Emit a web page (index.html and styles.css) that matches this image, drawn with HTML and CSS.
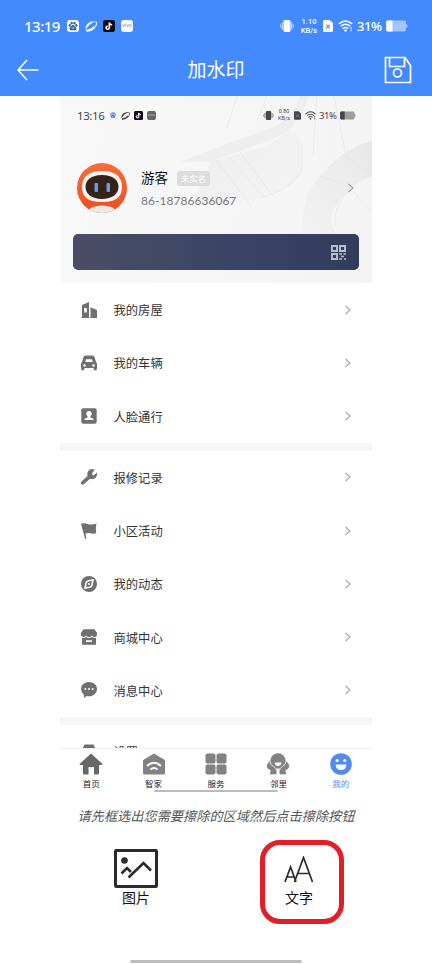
FILE: index.html
```html
<!DOCTYPE html>
<html lang="zh-CN">
<head>
<meta charset="utf-8">
<title>加水印</title>
<link rel="stylesheet" href="styles.css">
</head>
<body>
<svg class="defs" width="0" height="0">
  <symbol id="chev" viewBox="0 0 8 10"><path d="M1.5 .8 6 5 1.5 9.2" fill="none" stroke="#a0a0a0" stroke-width="1.1"/></symbol>
  <symbol id="paw" viewBox="0 0 12 12"><g fill="currentColor"><ellipse cx="2.8" cy="5.4" rx="1.1" ry="1.4"/><ellipse cx="4.7" cy="3.2" rx="1.1" ry="1.4"/><ellipse cx="7.5" cy="3.2" rx="1.1" ry="1.4"/><ellipse cx="9.3" cy="5.4" rx="1.1" ry="1.4"/><path d="M6 5C4.7 5 4.4 6.5 3.3 7.3 1.8 8.7 2.7 10.5 4.4 10.3q1.6-.3 3.2 0C9.5 10.5 10.2 8.7 8.7 7.3 7.6 6.5 7.3 5 6 5Z"/></g><path d="M4.7 8h2.7" stroke="#fff" stroke-width=".8"/></symbol>
  <symbol id="leaf" viewBox="0 0 12 12"><path d="M1 9.800C-.8 5.500 4.500.3 11.300 1.500 8 1.800 2.800 5 1 9.800Z" fill="currentColor"/><g fill="none" stroke="currentColor" stroke-width="1.100"><path d="M11 1.800C13 6 7 12 1.400 10.600"/><path d="M1.200 10.500C5 10.300 8 8.500 9.300 6.500" stroke-width="1.500"/></g></symbol>
  <symbol id="tok" viewBox="0 0 12 12"><rect width="12" height="12" rx="2" fill="#070b16"/><path d="M6.200 2.500v5.100a1.600 1.600 0 1 1-1.600-1.600M6.200 2.500q.5 2.200 2.800 2.300" fill="none" stroke="#ff5577" stroke-width="1.300" transform="translate(.4 .4)"/><path d="M6.200 2.500v5.100a1.600 1.600 0 1 1-1.600-1.600M6.200 2.500q.5 2.200 2.800 2.300" fill="none" stroke="#fff" stroke-width="1.300"/></symbol>
  <symbol id="vib" viewBox="0 0 14 12"><rect x="3.500" y="0" width="7" height="12" rx="1.500" fill="currentColor"/><path d="M2.300 2.500v7M11.700 2.500v7" stroke="currentColor" stroke-width="1.200" opacity=".75"/><path d="M.6 4.500v3M13.400 4.500v3" stroke="currentColor" opacity=".7"/></symbol>
  <symbol id="sim" viewBox="0 0 10 12"><path d="M1.500 0h5L10 3v7.500A1.500 1.500 0 0 1 8.500 12h-7A1.500 1.500 0 0 1 0 10.500v-9A1.500 1.500 0 0 1 1.500 0Z" fill="currentColor"/><path d="m3.200 4.700 3.600 3.600m0-3.600L3.200 8.300" class="simx"/></symbol>
  <symbol id="wifi" viewBox="0 0 15 12"><g fill="none" stroke="currentColor" stroke-width="1.400"><path d="M.7 4Q7.500-2.200 14.300 4M2.700 6.300q4.800-4.200 9.600 0M4.700 8.600q2.800-2.400 5.600 0"/></g><circle cx="7.500" cy="10.500" r="1.200" fill="currentColor"/><path d="M13 7v4.500" stroke="currentColor" stroke-dasharray="1.800 .7"/></symbol>
  <symbol id="bat" viewBox="0 0 22 12"><path d="M2 .5h16a2 2 0 0 1 2 2v1.500l1.500 1v2L20 8v1.500a2 2 0 0 1-2 2H2a2 2 0 0 1-2-2v-7a2 2 0 0 1 2-2Z" fill="currentColor" opacity=".5"/><path d="M2 .5h4.500v11H2a2 2 0 0 1-2-2v-7a2 2 0 0 1 2-2Z" fill="currentColor"/></symbol>
</svg>

<header class="header">
  <div class="status">
    <span class="time">13:19</span>
    <span class="badge"><svg width="12" height="12"><use href="#paw"/></svg></span>
    <svg width="12" height="12"><use href="#leaf"/></svg>
    <svg width="12" height="12"><use href="#tok"/></svg>
    <span class="badge vivo">vivo</span>
    <span class="status-right">
      <svg width="14" height="12"><use href="#vib"/></svg>
      <span class="rate"><b>1.10</b><b>KB/s</b></span>
      <svg class="sim" width="10" height="12"><use href="#sim"/></svg>
      <svg class="wifi" width="15" height="12"><use href="#wifi"/></svg>
      <span class="pct">31%</span>
      <svg class="bat" width="22" height="12"><use href="#bat"/></svg>
    </span>
  </div>
  <div class="titlebar">
    <svg width="22" height="22" viewBox="0 0 22 22" fill="none" stroke="#fff" stroke-width="1.500"><path d="M10 1 1 11l9 10M1 11h20.500"/></svg>
    <h1>加水印</h1>
    <svg width="28" height="28" viewBox="0 0 28 28" fill="none" stroke="#fff" stroke-width="1.700"><path d="M1.500 1.500h19.500l5.500 8v17h-25ZM5.500 1.500v9h15v-9"/><circle cx="13.500" cy="17" r="4"/></svg>
  </div>
</header>

<main class="shot">
  <section class="profile">
    <svg class="scene" width="312" height="187" viewBox="0 0 312 187" fill="none">
      <defs><linearGradient id="g" x1="0" y1="0" x2="1" y2="1"><stop offset="0" stop-color="#ededed"/><stop offset="1" stop-color="#f4f4f4"/></linearGradient><linearGradient id="h" x1="1" y1="0" x2="0" y2="1"><stop offset="0" stop-color="#e8e8e8"/><stop offset="1" stop-color="#f3f2f3"/></linearGradient></defs>
      <path d="M120 66Q160 50 212 32 232 22 241 0h8Q242 20 228 36L212 43 150 66Z" fill="#eee"/>
      <path d="M150 66 208 50 228 36Q238 36 242 48V76Q232 96 200 102 160 112 135 104Z" fill="url(#g)"/>
      <path d="M312 45Q285 51 262 78q-22 22-20 59h34q-13-17 8-37 12-14 28-20Z" fill="url(#h)"/>
      <g stroke="#e4e4e4" stroke-width=".6"><path d="M242 48v28Q226 96 200 102M285 60l27 18M260 80l29 10 23 27M276 130q-5-18 16-39M286 60 274 0M156 64l36 47M168 60l36 41M180 56l29 39M167 32 177 0M197 25 207 0M257 0l-4 60"/></g>
    </svg>
    <div class="status inner">
      <span class="time">13:16</span>
      <svg class="blue" width="8" height="8"><use href="#paw"/></svg>
      <svg width="9" height="9"><use href="#leaf"/></svg>
      <svg width="9" height="9"><use href="#tok"/></svg>
      <span class="badge vivo">vivo</span>
      <span class="status-right">
        <svg width="11" height="9"><use href="#vib"/></svg>
        <span class="rate"><b>0.80</b><b>KB/s</b></span>
        <svg class="sim" width="7" height="9"><use href="#sim"/></svg>
        <svg class="wifi" width="11" height="9"><use href="#wifi"/></svg>
        <span class="pct">31%</span>
        <svg class="bat" width="16" height="9"><use href="#bat"/></svg>
      </span>
    </div>
    <div class="user">
      <svg width="50" height="50" viewBox="0 0 50 50">
        <defs><linearGradient id="o" x1="0" y1="0" x2="0" y2="1"><stop offset="0" stop-color="#f76d3b"/><stop offset="1" stop-color="#f04e1d"/></linearGradient><clipPath id="c"><circle cx="25" cy="25" r="25"/></clipPath></defs>
        <g clip-path="url(#c)"><rect width="50" height="50" fill="url(#o)"/><path d="M5 24C5 12 14 8 25 8s20 4 20 16-9 15-20 15S5 36 5 24Z" fill="#f5f3f2"/><path d="M25 12c11 0 16.500 5 16.500 12S35 36 25 36 8.500 31 8.500 24 14 12 25 12Z" fill="#35231b"/><rect x="17.500" y="20" width="3.500" height="9" rx="1" fill="#659ed8"/><rect x="29.500" y="20" width="3.500" height="9" rx="1" fill="#659ed8"/><ellipse cx="25" cy="48" rx="13" ry="5.500" fill="#eee8e5"/></g>
      </svg>
      <div class="who">
        <div class="name">游客<span class="tag">未实名</span></div>
        <div class="phone">86-18786636067</div>
      </div>
      <svg class="go" width="8" height="10"><use href="#chev"/></svg>
    </div>
    <div class="card">
      <svg width="15" height="15" viewBox="0 0 15 15" fill="none" stroke="#b9bdcb" stroke-width="2"><path d="M1 1h5v5H1ZM9 1h5v5H9ZM1 9h5v5H1Z"/><path d="M8 9h3M12.500 9H15M10 11.500h3M8 14h3M13 14h2" stroke-width="1.600"/></svg>
    </div>
  </section>

  <div class="list">
    <div class="row"><svg class="ic" viewBox="0 0 18 18"><path fill-rule="evenodd" d="M2 16.500V4l7-3v15.500h1.500V6.300L17 9v8H1v-.5ZM4.200 7v4.500h2.600V7Z"/></svg><span>我的房屋</span><svg width="8" height="10"><use href="#chev"/></svg></div>
    <div class="row"><svg class="ic" viewBox="0 0 18 18"><path fill-rule="evenodd" d="M5.500 1.500h7q1.500 0 2 1.500L16 8q1 .8 1 2v4q0 2.500-1.700 2.500-1.800 0-1.800-2.500h-9q0 2.500-1.800 2.500Q1 16.500 1 14v-4q0-1.200 1-2l1.500-5Q4 1.500 5.500 1.500Zm.5 3.800L5.300 8h7.400L12 5.300Z"/><circle cx="4.500" cy="11.500" r="1.200" fill="#fff"/><circle cx="13.500" cy="11.500" r="1.200" fill="#fff"/></svg><span>我的车辆</span><svg width="8" height="10"><use href="#chev"/></svg></div>
    <div class="row"><svg class="ic" viewBox="0 0 18 18"><rect x="1.300" y="1.300" width="15.400" height="15.400" rx="2"/><path fill="#fff" d="M9 4a2.700 2.700 0 0 1 1.500 5v1.500l3 1.200V13h-9v-1.300l3-1.200V9A2.700 2.700 0 0 1 9 4Z"/></svg><span>人脸通行</span><svg width="8" height="10"><use href="#chev"/></svg></div>
    <div class="sep"></div>
    <div class="row"><svg class="ic" viewBox="0 0 18 18"><path d="M17 4.500 13.500 7.500l-1.700-1.500L14.500 1.500Q10.500.2 8.400 2.700 6.500 5 7.500 8L1.300 13.700q-1 1.500.2 2.600 1.400 1.100 2.600-.3L10 10.700q3.700 1 5.900-1.300Q17.700 7.200 17 4.500Z"/></svg><span>报修记录</span><svg width="8" height="10"><use href="#chev"/></svg></div>
    <div class="row"><svg class="ic" viewBox="0 0 18 18"><path d="M1 1.500q3.700-.7 7 .5t8.500-.4L15.800 6l.4 5.300q-3 .8-5.700 0-2.800-.6-5 .2l.8 5.200H5Z"/></svg><span>小区活动</span><svg width="8" height="10"><use href="#chev"/></svg></div>
    <div class="row"><svg class="ic" viewBox="0 0 18 18"><circle cx="9" cy="9" r="8"/><path d="M13 5 11.800 10.500Q11 12 9.500 12.300L5 13l1.200-5.500Q7 6 8.500 5.700Z" fill="none" stroke="#fff" stroke-width="1.600"/><circle cx="9" cy="9" r="1" fill="#fff"/></svg><span>我的动态</span><svg width="8" height="10"><use href="#chev"/></svg></div>
    <div class="row"><svg class="ic" viewBox="0 0 18 18"><path d="M3.500 1.300h11L17 5v2q-.4 2-2.200 2T12 7.500Q11 9 9 9T6 7.500Q5 9 3.200 9T1 7V5Z"/><path fill-rule="evenodd" d="M2 10q2.500.3 4-1 3 2 6 0 1.500 1.300 4 1v6.700H2Zm4 2.300V14h6v-1.700Z"/></svg><span>商城中心</span><svg width="8" height="10"><use href="#chev"/></svg></div>
    <div class="row"><svg class="ic" viewBox="0 0 18 18"><path d="M9 1c4.500 0 8 3 8 7s-3.500 7.300-8 7.300q-1.300 0-2.300-.2L4 17v-3Q1 11.500 1 8c0-4 3.500-7 8-7Z"/><g fill="#fff"><circle cx="5.300" cy="8" r="1"/><circle cx="9" cy="8" r="1"/><circle cx="12.700" cy="8" r="1"/></g></svg><span>消息中心</span><svg width="8" height="10"><use href="#chev"/></svg></div>
    <div class="sep"></div>
    <div class="row"><svg class="ic" viewBox="0 0 18 18"><path d="M4.500 1.500h9L17 9l-3.500 7h-9L1 9Z"/></svg><span>设置</span></div>
  </div>

  <nav class="tabs">
    <div class="tab"><svg width="24" height="22" viewBox="0 0 24 22"><path d="M12 .5 23.500 11q.3 1-1 1H20v8.500q0 1-1 1h-4V14H9.500v7.500H5q-1 0-1-1V12H1.500q-1.300 0-1-1Z" fill="#676767"/></svg>首页</div>
    <div class="tab"><svg width="24" height="22" viewBox="0 0 24 22"><path d="M12 .5 22 6.500q1 .6 1 2V20q0 1.500-1.500 1.500h-19Q1 21.500 1 20V8.500Q1 7.100 2 6.500Z" fill="#828282"/><path d="M5 13q7-6.500 14 0M8.500 16.500q3.500-3 7 0" fill="none" stroke="#fff" stroke-width="2"/></svg>智家</div>
    <div class="tab"><svg width="22" height="22" viewBox="0 0 22 22" fill="#828282"><rect x=".5" y=".5" width="10" height="10" rx="2"/><rect x="11.500" y=".5" width="10" height="10" rx="2"/><rect x=".5" y="11.500" width="10" height="10" rx="2"/><rect x="11.500" y="11.500" width="10" height="10" rx="2"/></svg>服务</div>
    <div class="tab"><svg width="24" height="22" viewBox="0 0 24 22" fill="#828282"><circle cx="12" cy="8" r="7.700"/><path d="M8.500 9.500h7q-.5 3.500-3.500 3.500t-3.500-3.500Z" fill="#fff"/><path d="M3.500 7.500.8 11.500q-1 3 1 4.500l2.500 1.500-1 4.200H10.500q1.500-4.200-1-6.700L5 11.500ZM20.500 7.500l2.700 4q1 3-1 4.500l-2.500 1.500 1 4.200H13.500q-1.500-4.200 1-6.700l4.500-3.500Z" stroke="#fff" stroke-width=".7"/></svg>邻里</div>
    <div class="tab on"><svg width="22" height="22" viewBox="0 0 22 22"><circle cx="11" cy="11" r="10.800" fill="#528bed"/><circle cx="7.200" cy="7.500" r="1.600" fill="#fff"/><circle cx="14.800" cy="7.500" r="1.600" fill="#fff"/><path d="M6.500 11.500h9q1 0 .8 1-.8 4.500-5.300 4.500t-5.300-4.500q-.2-1 .8-1Z" fill="#fff"/></svg>我的</div>
    <i class="bar"></i>
  </nav>
</main>

<p class="hint">请先框选出您需要擦除的区域然后点击擦除按钮</p>

<div class="tools">
  <button class="tool">
    <svg width="44" height="39" viewBox="0 0 44 39" fill="none" stroke="#2b2b2b" stroke-width="2.600"><rect x="1.500" y="1.500" width="41" height="36" rx=".7" stroke-width="3"/><circle cx="10.500" cy="11.500" r="3.300" fill="#2b2b2b" stroke="none"/><path d="m7.500 24.500 5.500-5.500 4 4M14.500 28.500 29.500 14l7.500 7.500"/></svg>
    图片
  </button>
  <button class="tool marked">
    <svg width="30" height="27" viewBox="0 0 30 27" fill="none" stroke="#2b2b2b" stroke-width="1.700"><path d="m1 26 5.600-15 5.400 15M3 21h7.200M10.500 26 19.500 1.500 28.500 26M13.500 17.500h12"/></svg>
    文字
  </button>
</div>
<div class="home"></div>
</body>
</html>
```
FILE: styles.css
```css
* { box-sizing: border-box; }
body {
  margin: 0;
  width: 432px;
  height: 964px;
  overflow: hidden;
  background: #fff;
  font-family: "Noto Sans", "Noto Sans CJK SC", sans-serif;
  display: flex;
  flex-direction: column;
}
svg { display: block; flex: none; }
.defs { position: absolute; }

.header { height: 96px; background: #448aff; color: #fff; flex: none; }
.status { display: flex; align-items: center; height: 26px; padding: 0 24px; gap: 6px; }
.header .status { height: 51px; }
.time { width: 37px; font-size: 15px; font-weight: 500; letter-spacing: -.5px; white-space: nowrap; }
.badge { width: 12px; height: 12px; border-radius: 3px; background: #fff; color: #315da8; display: flex; align-items: center; justify-content: center; }
.vivo { font-size: 5px; line-height: 1; color: #5f86cc; }
.status-right { margin-left: auto; display: flex; align-items: center; }
.rate { display: flex; flex-direction: column; width: 18px; margin-left: 6px; font-family: Roboto, sans-serif; }
.rate b { font-size: 7.500px; line-height: 9px; font-weight: 500; white-space: nowrap; text-align: center; }
.sim { margin-left: 5px; }
.simx { stroke: #448aff; stroke-width: 1.1; }
.wifi { margin-left: 5px; }
.pct { width: 25px; margin: 0 4px; font-size: 13px; font-weight: 500; letter-spacing: -.4px; }

.titlebar { display: flex; align-items: center; justify-content: space-between; padding: 0 20px 0 17px; height: 37px; }
h1 { margin: 0; padding-left: 9px; font-size: 19px; font-weight: 400; line-height: 28px; padding-top: 1px; }

.shot { width: 312px; height: 704px; margin-left: 60px; flex: none; }
.profile { position: relative; height: 187px; padding-top: 6px; background: linear-gradient(100deg, #f8f8f8, #f5f4f5); }
.scene { position: absolute; left: 0; top: 0; }
.inner { position: relative; padding: 0 16px 0 17px; height: 26px; gap: 4px; color: #484848; }
.inner .time { width: 28px; font-size: 11.500px; font-weight: 400; letter-spacing: -.4px; }
.inner .badge { width: 9px; height: 9px; border-radius: 2px; background: #646464; color: #ccc; font-size: 4px; }
.inner .blue { color: #3c72d9; }
.inner .rate { width: 14px; margin-left: 3px; }
.inner .rate b { font-size: 5.500px; line-height: 7px; font-weight: 400; }
.inner .sim { margin-left: 3px; }
.inner .simx { stroke: #fff; }
.inner .wifi { margin-left: 4px; }
.inner .pct { width: 18px; margin: 0 3px; font-size: 9.500px; font-weight: 400; letter-spacing: -.4px; }
.user { position: relative; display: flex; align-items: center; height: 50px; margin: 35px 17px 0; }
.who { margin-left: 14px; padding-top: 3px; }
.name { display: flex; align-items: center; font-size: 13.500px; line-height: 21px; color: #111; }
.tag { margin-left: 9px; width: 33px; height: 15px; border-radius: 3px; background: #dcdcdc; color: #fff; font-size: 8.300px; line-height: 15px; text-align: center; }
.phone { font-family: Lato, "Noto Sans", sans-serif; font-size: 12px; line-height: 22px; letter-spacing: .03px; color: #7b7b7b; padding-top: 1px; }
.go { margin-left: auto; }
.card { position: relative; display: flex; align-items: center; justify-content: flex-end; height: 36px; margin: 21px 13px 0; padding-right: 13px; border-radius: 5px; background: linear-gradient(90deg, #4c4d64, #414964 30%, #374265 65%, #333d5b); }

.list { height: 466px; overflow: hidden; border-bottom: 1px solid #efefef; }
.row { display: flex; align-items: center; height: 53.250px; padding: 0 20px; font-size: 12.300px; color: #333; }
.row span { padding-top: 1px; }
.ic { width: 18px; height: 18px; margin-right: 15.500px; fill: #707070; }
.row svg:last-child { margin-left: auto; }
.sep { height: 8px; background: #f6f6f6; }

.tabs { position: relative; display: grid; grid-template-columns: repeat(5, 1fr); padding-top: 4px; }
.tab { display: flex; flex-direction: column; align-items: center; font-size: 8.500px; line-height: 15px; gap: 1px; color: #222; }
.on { color: #528bed; }
.bar { position: absolute; left: 94px; top: 41px; width: 124px; height: 2px; background: #bbb; border-radius: 1px; }

.hint { margin: 6px 0 0; height: 20px; line-height: 20px; font-size: 13.200px; font-style: italic; text-align: center; color: #555; white-space: nowrap; flex: none; }
.tools { display: grid; grid-template-columns: 84px 84px; column-gap: 82px; margin: 14px 0 0 94px; flex: none; }
.tool { height: 84px; padding: 0; border: 0; background: none; font: inherit; font-size: 14px; line-height: 20px; color: #111; display: flex; flex-direction: column; align-items: center; justify-content: flex-start; padding-top: 9px; }
.tool.marked { border: 5px solid #e41e26; border-radius: 20px; padding-top: 11px; gap: 5px; padding-right: 6px; }
.home { width: 172px; height: 3px; margin: 36px auto 0 130px; border-radius: 2px; background: #bdbdbd; flex: none; }
```
